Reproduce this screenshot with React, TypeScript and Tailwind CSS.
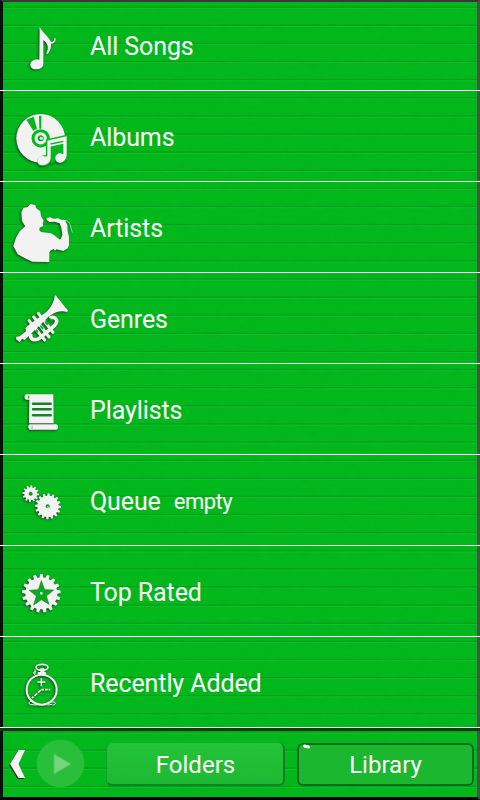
import type { ReactNode } from "react";

const SHADOW = "drop-shadow(-1px 1px 0.8px rgba(40,40,40,0.8))";
const GREEN = "#03b81d";

// Points of a cog with square teeth
function cog(cx: number, cy: number, outer: number, inner: number, teeth: number, turn = 0) {
    const points: string[] = [];
    const step = (Math.PI * 2) / teeth;
    for (let i = 0; i < teeth; i++) {
        const a = i * step + turn;
        [
            [inner, -0.31],
            [outer, -0.2],
            [outer, 0.2],
            [inner, 0.31],
        ].forEach(([r, o]) => {
            points.push(
                `${(cx + r * Math.cos(a + o * step)).toFixed(1)},${(cy + r * Math.sin(a + o * step)).toFixed(1)}`,
            );
        });
    }
    return points.join(" ");
}

function RowIcon({ top, children }: { top: number; children: ReactNode }) {
    return (
        <svg
            viewBox={`0 ${top} 270 270`}
            className="h-[90px] w-[90px] shrink-0"
            fill="#f2f2f2"
            style={{ filter: SHADOW }}
        >
            {children}
        </svg>
    );
}

function SongIcon() {
    return (
        <RowIcon top={-30}>
            <path d="M119 50C126 66 144 78 150 91C154 98 162 98 163 85L167 85C167 97 161 102 153 101C154 113 149 128 141 133L139 129C148 115 143 99 130 91L130 161C130 173 119 178 108 178C96 178 90 171 91 162C92 153 104 146 118 149Z" />
        </RowIcon>
    );
}

function AlbumIcon() {
    return (
        <RowIcon top={-12}>
            <circle cx="122" cy="130" r="73" />
            <g fill={GREEN}>
                <path d="M79 74L101 65L111 101L100 107Z" />
                <path d="M117 62L124 62L124 101L118 101Z" />
            </g>
            <circle cx="122" cy="130" r="23" fill="none" stroke={GREEN} strokeWidth="9" />
            <circle cx="122" cy="130" r="9" fill={GREEN} />
            <circle cx="124" cy="130" r="4.5" />
            <path
                d="M140 135L202 121L202 181C202 195 191 204 178 202C162 199 164 180 178 177L188 175L188 149L154 156L154 189C154 204 141 213 125 211C108 208 111 188 126 184L140 182Z"
                stroke={GREEN}
                strokeWidth="4"
            />
            <path d="M152 147L190 139" stroke={GREEN} strokeWidth="4" />
            <path d="M154 156L188 149L188 174Q168 174 165 188L165 202L153 207Z" fill={GREEN} />
            <circle cx="126" cy="197" r="14" />
            <circle cx="180" cy="189" r="14" />
        </RowIcon>
    );
}

function ArtistIcon() {
    return (
        <RowIcon top={-9}>
            <path d="M91 57L106 60L108 69L121 79L123 94L131 107L128 114L130 123L119 128L118 136L123 141L153 145C164 150 171 159 181 164L187 150L184 128L179 115L163 110L148 111L140 105L140 99L151 97L160 101L175 100L183 104L195 105L202 120L203 139L207 157L207 180L203 190L190 198L169 193L165 197L161 192L151 197L148 201L148 231L97 230L75 220L53 208L40 183L48 158L59 139L76 124L66 109L64 82L70 69L83 66Z" />
            <path d="M192 106Q207 106 211 121L217 143" fill="none" stroke="#e4eee4" strokeWidth="2" />
        </RowIcon>
    );
}

function GenreIcon() {
    return (
        <RowIcon top={-9}>
            <path d="M167 58L204 104L201 108C184 103 164 107 145 123L74 192L66 188L59 198L48 190L49 182L59 181L78 166L76 156L83 149L132 113C151 100 162 78 164 60Z" />
            <path
                d="M92 173C89 195 109 195 122 184L164 148C178 132 164 119 149 127"
                fill="none"
                stroke="#f2f2f2"
                strokeWidth="11"
            />
            <g stroke="#f2f2f2" strokeWidth="9" strokeLinecap="round">
                <path d="M87 134L134 192M101 123L147 183M115 112L159 169" />
            </g>
            <g stroke={GREEN} strokeWidth="6" strokeLinecap="round">
                <path d="M109 163L112 167M123 151L128 157M137 138L142 144M151 130L155 134" />
            </g>
        </RowIcon>
    );
}

function PlaylistIcon() {
    return (
        <RowIcon top={-9}>
            <path d="M78 82L160 82L161 169L87 169L88 98L78 98C72 97 72 84 78 82Z" />
            <path d="M89 172L169 172C176 174 176 186 169 188L89 188C83 184 83 175 89 172Z" />
            <path d="M86 86L86 95" stroke={GREEN} strokeWidth="3" />
            <path d="M99 110H152M99 127H152M99 145H152" stroke="#1a7f29" strokeWidth="7.5" strokeLinecap="round" />
            <path d="M91 170H163M96 176V186" stroke="#718274" strokeWidth="2" />
        </RowIcon>
    );
}

function QueueIcon() {
    return (
        <RowIcon top={-9}>
            <polygon points={cog(92, 107, 25, 19, 12, 0.1)} />
            <polygon points={cog(144, 145, 39, 32, 16, 0.05)} />
            <circle cx="92" cy="107" r="6" fill="#149a28" />
            <circle cx="143" cy="145" r="6" fill="#149a28" />
            <circle cx="144" cy="147" r="2.5" />
        </RowIcon>
    );
}

function RatedIcon() {
    return (
        <RowIcon top={-12}>
            <polygon points={cog(124, 130, 58, 48, 17, -Math.PI / 2)} />
            <path
                d="M124 92L134 119L161 120L139 138L147 163L124 149L101 165L109 138L88 121L115 119Z"
                fill="#08aa20"
                stroke="#28822f"
                strokeWidth="2"
            />
            <circle cx="124" cy="130" r="4" />
        </RowIcon>
    );
}

function RecentIcon() {
    return (
        <RowIcon top={-9}>
            <g fill="none" stroke="#f2f2f2">
                <circle cx="125" cy="149" r="45" strokeWidth="6" />
                <ellipse cx="126" cy="82" rx="18" ry="9" strokeWidth="5" />
                <path d="M105 105L100 98L109 93M105 88L105 102" strokeWidth="3" />
                <path d="M124 115V139M112 126H136" strokeWidth="4.5" />
                <path d="M123 150L96 174" strokeWidth="5" strokeDasharray="12 3" />
                <path d="M124 149H151" strokeWidth="5" strokeDasharray="8 3" />
                <path d="M97 182C84 184 84 195 96 194L111 195M142 195L157 193M153 186C168 183 171 194 158 195" strokeWidth="3" />
            </g>
            <path d="M121 85H133V96H138V103H113V96H121Z" />
        </RowIcon>
    );
}

const items: { label: string; note?: string; icon: ReactNode }[] = [
    { label: "All Songs", icon: <SongIcon /> },
    { label: "Albums", icon: <AlbumIcon /> },
    { label: "Artists", icon: <ArtistIcon /> },
    { label: "Genres", icon: <GenreIcon /> },
    { label: "Playlists", icon: <PlaylistIcon /> },
    { label: "Queue", note: "empty", icon: <QueueIcon /> },
    { label: "Top Rated", icon: <RatedIcon /> },
    { label: "Recently Added", icon: <RecentIcon /> },
];

// Embossed horizontal ribs with a faint grain
function Texture() {
    const ribs = Array.from({ length: 44 }, (_, i) => 6.5 + i * 18.12);
    return (
        <svg className="pointer-events-none absolute inset-0 h-full w-full">
            <filter id="grain" x="0" y="0" width="100%" height="100%">
                <feTurbulence type="fractalNoise" baseFrequency="0.1 0.16" numOctaves="3" seed="4" />
                <feColorMatrix values="0 0 0 0 0  0 0 0 0 0.3  0 0 0 0 0  0.6 0 0 0 -0.22" />
            </filter>
            <rect width="480" height="800" filter="url(#grain)" opacity="0.3" />
            {ribs.map((y) => (
                <g key={y}>
                    <rect x="3" y={y} width="474" height="1.2" fill="#04791a" opacity="0.35" />
                    <rect x="3" y={y + 1.4} width="474" height="1" fill="#35d14b" opacity="0.3" />
                </g>
            ))}
        </svg>
    );
}

export default function App() {
    return (
        <div className="relative flex h-[800px] w-[480px] flex-col overflow-hidden bg-[#03b81d] font-['Roboto',sans-serif] text-white">
            <Texture />
            {/* Frame */}
            <div className="pointer-events-none absolute inset-0 border-t-2 border-r-[3px] border-b-[3px] border-l-[3px] border-t-[#3c3539] border-r-[#514c51] border-b-black border-l-[#071108]" />

            <ul className="relative">
                {items.map((item) => (
                    <li key={item.label} className="flex h-[91px] items-center border-b border-white">
                        {item.icon}
                        <span className="pt-[4px] text-[25px] leading-[30px] tracking-[-0.1px]">{item.label}</span>
                        {item.note && (
                            <span className="ml-[13px] pt-[3px] text-[22px] leading-[30px] tracking-[-0.5px]">
                                {item.note}
                            </span>
                        )}
                    </li>
                ))}
            </ul>

            <div className="relative flex h-[72px] items-start border-t-[3px] border-[#143718] pl-[3px]">
                <svg viewBox="0 0 34 66" className="h-[66px] w-[34px]">
                    <path
                        d="M15.5 19H22L15.5 33L22 47H15.5L7 33Z"
                        fill="#f4f4f4"
                        style={{ filter: "drop-shadow(-1px 1px 0.6px rgba(30,30,30,0.9))" }}
                    />
                </svg>
                <div className="mt-[9px] flex size-[47px] items-center justify-center rounded-full bg-[#29bf3b] shadow-[0_0_2px_#29bf3b]">
                    <svg viewBox="0 0 47 47" className="size-[47px]">
                        <path d="M17 14V34L34 24Z" fill="#74d47f" stroke="#4bc95a" strokeWidth="1" />
                    </svg>
                </div>
                <button className="mt-3 ml-[22px] h-[43px] w-[179px] rounded-md border-r-2 border-b-2 border-l border-[#187d27] border-l-[#159f29] bg-gradient-to-b from-[#27c43b]/90 to-[#20b934]/90 pt-[3px] text-[24px] leading-[36px]">
                    <span className="pl-px">Folders</span>
                </button>
                <button className="relative mt-3 ml-[12px] h-[43px] w-[177px] rounded-md border-2 border-[#126c20] bg-[#1eb732]/90 text-[24px] leading-[41px]">
                    <span className="absolute top-0 left-1 h-[3px] w-[7px] rotate-12 rounded-full bg-white" />
                    Library
                </button>
            </div>
        </div>
    );
}
